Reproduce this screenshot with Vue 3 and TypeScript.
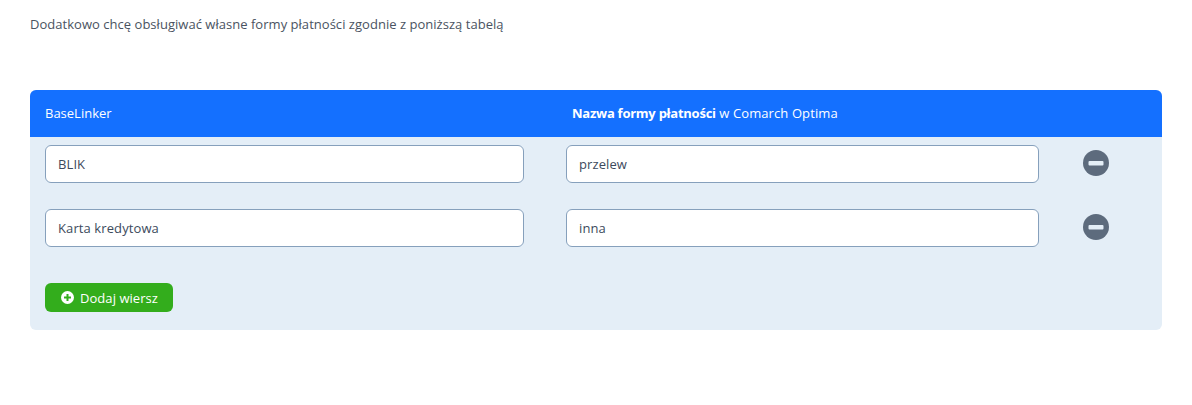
<script setup lang="ts">
interface PaymentRow {
  source: string;
  target: string;
}

const rows: PaymentRow[] = [
  { source: 'BLIK', target: 'przelew' },
  { source: 'Karta kredytowa', target: 'inna' }
];
</script>

<template>
  <div class="page">
    <p class="intro">Dodatkowo chcę obsługiwać własne formy płatności zgodnie z poniższą tabelą</p>

    <div class="table">
      <div class="table-head">
        <div class="head-source">BaseLinker</div>
        <div class="head-target"><strong>Nazwa formy płatności</strong> w Comarch Optima</div>
      </div>

      <div class="table-body">
        <div v-for="row in rows" :key="row.source" class="row">
          <input class="field field-source" type="text" :value="row.source" />
          <input class="field field-target" type="text" :value="row.target" />
          <button class="remove" type="button" aria-label="Usuń wiersz">
            <svg width="26" height="26" viewBox="0 0 26 26">
              <circle cx="13" cy="13" r="13" fill="#5d6b7d" />
              <rect x="5.5" y="11" width="15" height="4.5" rx="1" fill="#e4eef7" />
            </svg>
          </button>
        </div>

        <button class="add" type="button">
          <svg width="13" height="13" viewBox="0 0 13 13">
            <circle cx="6.5" cy="6.5" r="6.5" fill="#fff" />
            <rect x="3" y="5.5" width="7" height="2" fill="#33ad1c" />
            <rect x="5.5" y="3" width="2" height="7" fill="#33ad1c" />
          </svg>
          Dodaj wiersz
        </button>
      </div>
    </div>
  </div>
</template>

<style>
body {
  background: #fff;
}
</style>

<style scoped>
.page {
  padding: 16px 30px 75px;
  font-family: "Open Sans", "Inter", sans-serif;
}

.intro {
  margin: 0 0 58px;
  font-size: 13px;
  line-height: 16px;
  letter-spacing: 0.03px;
  color: #4a5361;
}

.table {
  border-radius: 6px;
  overflow: hidden;
  background: #e4eef7;
}

.table-head {
  display: flex;
  align-items: center;
  height: 47px;
  padding-bottom: 2px;
  box-sizing: border-box;
  background: #1470ff;
  color: #fff;
  font-size: 13px;
}

.head-target {
  letter-spacing: 0.1px;
}

.table-head strong {
  letter-spacing: -0.25px;
}

.head-source {
  width: 542px;
  padding-left: 15px;
  box-sizing: border-box;
}

.table-body {
  display: flex;
  flex-direction: column;
  align-items: flex-start;
  padding: 8px 15px 18px;
}

.row {
  display: flex;
  align-items: center;
  height: 38px;
  margin-bottom: 26px;
}

.field {
  box-sizing: border-box;
  height: 38px;
  padding: 0 12px;
  border: 1px solid #86a0bc;
  border-radius: 6px;
  background: #fff;
  color: #3c4a5c;
  font-family: inherit;
  font-size: 13px;
  letter-spacing: 0.1px;
  outline: none;
}

.field-source {
  width: 479px;
  margin-right: 42px;
}

.field-target {
  width: 473px;
  margin-right: 44px;
}

.remove {
  display: block;
  width: 26px;
  height: 26px;
  margin-bottom: 2px;
  padding: 0;
  border: 0;
  background: none;
}

.remove svg,
.add svg {
  display: block;
}

.add {
  display: flex;
  align-items: center;
  gap: 6px;
  height: 29px;
  width: 128px;
  margin-top: 10px;
  padding: 0 0 0 16px;
  border: 0;
  border-radius: 6px;
  background: #33ad1c;
  color: #fff;
  font-family: inherit;
  font-size: 13px;
  font-weight: 500;
  letter-spacing: 0.05px;
}
</style>
